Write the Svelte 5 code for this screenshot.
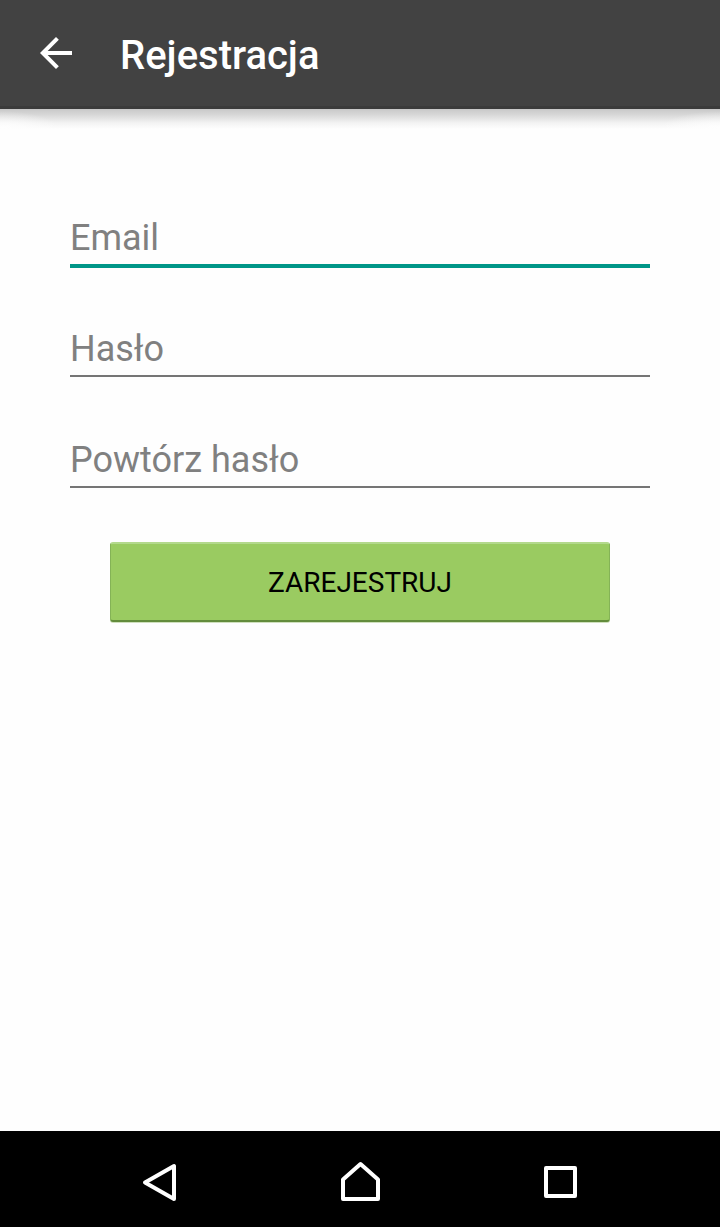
<script>
  const fields = [
    { id: 'email', label: 'Email', type: 'email' },
    { id: 'password', label: 'Hasło', type: 'password' },
    { id: 'repeat', label: 'Powtórz hasło', type: 'password' }
  ];
  let active = $state('email');
</script>

<div class="screen">
  <header>
    <button class="back" type="button" aria-label="Wstecz">
      <svg viewBox="0 0 24 24" width="48" height="48" fill="#fff">
        <path d="M20 11H7.83l5.59-5.59L12 4l-8 8 8 8 1.41-1.41L7.83 13H20z" />
      </svg>
    </button>
    <h1>Rejestracja</h1>
  </header>

  <main>
    <form onsubmit={(e) => e.preventDefault()}>
      {#each fields as field (field.id)}
        <input
          id={field.id}
          type={field.type}
          placeholder={field.label}
          aria-label={field.label}
          class:active={active === field.id}
          onfocus={() => (active = field.id)}
        />
      {/each}
      <button class="submit" type="submit">ZAREJESTRUJ</button>
    </form>
  </main>

  <nav>
    <button type="button" aria-label="Cofnij">
      <svg viewBox="0 0 48 48" width="48" height="48">
        <path d="M38 11V44L9 27.500Z" />
      </svg>
    </button>
    <button type="button" aria-label="Ekran główny">
      <svg viewBox="0 0 48 48" width="48" height="48">
        <path d="M7 24.500L24.500 9L42 24.500V44H7Z" />
      </svg>
    </button>
    <button type="button" aria-label="Ostatnie">
      <svg viewBox="0 0 48 48" width="48" height="48">
        <rect x="10" y="13" width="29" height="28" />
      </svg>
    </button>
  </nav>
</div>

<style>
  :global(body) {
    margin: 0;
    background: #fefefe;
  }
  .screen {
    min-height: 100vh;
    display: flex;
    flex-direction: column;
    font-family: Roboto, sans-serif;
  }
  button {
    font: inherit;
    border: 0;
    padding: 0;
    background: none;
    cursor: pointer;
  }
  svg {
    display: block;
  }
  header {
    display: flex;
    align-items: center;
    gap: 40px;
    box-sizing: border-box;
    height: 109px;
    padding: 0 32px;
    background: #424242;
    border-bottom: 3px solid #3b3b3b;
  }
  h1 {
    margin: 0;
    padding-top: 6px;
    color: #fff;
    font-size: 40px;
    line-height: 48px;
    font-weight: 500;
  }
  main {
    flex: 1;
    padding: 91px 70px 40px;
    background:
      radial-gradient(ellipse 60px 18px at 0 20px, #fefefe, transparent) no-repeat 0 0 / 60px 20px,
      radial-gradient(ellipse 60px 18px at 60px 20px, #fefefe, transparent) no-repeat 100% 0 / 60px 20px,
      linear-gradient(#c8c8c8, #d8d8d8 30%, #f3f3f3 70%, #fefefe) no-repeat 0 0 / 100% 20px;
  }
  form {
    display: flex;
    flex-direction: column;
    gap: 45px;
  }
  input {
    box-sizing: border-box;
    width: 100%;
    height: 66px;
    padding: 12px 0 0;
    border: 0;
    border-bottom: 2px solid #757575;
    border-radius: 0;
    outline: 0;
    background: none;
    color: #212121;
    font: 36px/48px Roboto, sans-serif;
  }
  input::placeholder {
    color: #808080;
    opacity: 1;
  }
  input.active {
    border-color: #009688;
    box-shadow: 0 2px #009688;
  }
  .submit {
    box-sizing: border-box;
    height: 80px;
    margin: 9px 40px 0;
    padding-top: 2px;
    border: 1px solid #84b356;
    border-top: 2px solid #b3d98c;
    border-bottom: 2px solid #638c3c;
    border-radius: 3px;
    background: #9acb61;
    color: #000;
    font-size: 28px;
    line-height: 32px;
    box-shadow: 0 1px #cfe0bd;
  }
  nav {
    display: grid;
    grid-template-columns: repeat(3, 1fr);
    height: 96px;
    padding: 0 60px;
    background: #000;
  }
  nav button {
    display: grid;
    place-items: center;
  }
  nav svg {
    fill: none;
    stroke: #fff;
    stroke-width: 4;
    stroke-linejoin: round;
  }
</style>
